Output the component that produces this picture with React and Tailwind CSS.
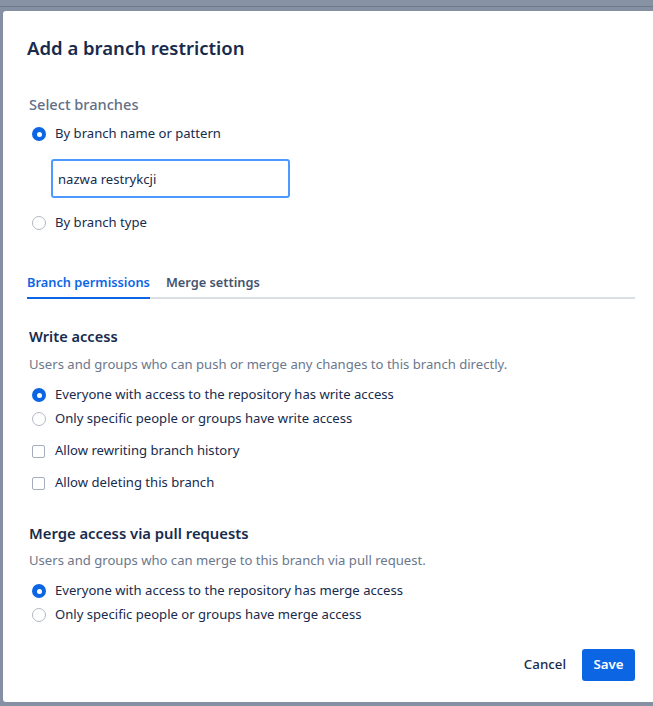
const font = { fontFamily: '"Noto Sans", sans-serif' };

const Radio = ({ checked, label }) => (
  <label className="flex items-center h-6 gap-[9px] text-[13.1px] text-[#172b4d]">
    {checked ? (
      <span className="w-[14px] h-[14px] rounded-full bg-[#0c66e4] flex items-center justify-center ml-[5px]">
        <span className="w-[5px] h-[5px] rounded-full bg-white" />
      </span>
    ) : (
      <span className="w-[14px] h-[14px] rounded-full border border-[#b3b9c4] bg-white ml-[5px]" />
    )}
    <span>{label}</span>
  </label>
);

const Checkbox = ({ label }) => (
  <label className="flex items-center h-6 gap-[10px] text-[13.1px] text-[#172b4d]">
    <span className="w-[13px] h-[13px] rounded-[2px] border-[1.5px] border-[#a5adba] bg-white ml-[5px]" />
    <span>{label}</span>
  </label>
);

const App = () => {
  return (
    <div style={font} className="w-[653px] h-[706px] overflow-hidden bg-[#8590a2]">
      <div className="h-[7px] border-b border-[#6f7a8c] bg-[#8792a3]" />
      <div className="pt-[4px] pl-[3px]">
        <div className="w-[656px] h-[691px] bg-white rounded-[3px] px-6 pt-[25px] flex flex-col">
          <h1 className="h-6 flex items-center text-[18.5px] font-semibold text-[#172b4d]">Add a branch restriction</h1>

          <h2 className="mt-[35px] h-5 flex items-center pl-[2px] text-[14.6px] font-medium text-[#626f86]">Select branches</h2>
          <div className="mt-[7px]">
            <Radio checked label="By branch name or pattern" />
          </div>
          <input
            readOnly
            value="nazwa restrykcji"
            style={font}
            className="mt-[13px] ml-6 w-[239px] h-[39px] rounded-[3px] border-2 border-[#4c9aff] px-[5px] text-[13.1px] text-[#172b4d] outline-none"
          />
          <div className="mt-[13px]">
            <Radio label="By branch type" />
          </div>

          {/* tabs */}
          <div className="mt-[34px] flex border-b-2 border-[#dcdfe4] w-[608px]">
            <div className="h-[28px] flex items-center text-[12.8px] font-semibold text-[#0c66e4] relative">
              Branch permissions
              <span className="absolute left-0 right-0 -bottom-[2px] h-[2px] bg-[#0c66e4]" />
            </div>
            <div className="h-[28px] flex items-center ml-4 text-[12.8px] font-semibold text-[#44546f]">Merge settings</div>
          </div>

          <h3 className="mt-[28px] h-5 flex items-center pl-[2px] text-[14.6px] font-semibold text-[#172b4d]">Write access</h3>
          <p className="mt-2 h-5 flex items-center pl-[2px] text-[13.1px] text-[#6b778c]">
            Users and groups who can push or merge any changes to this branch directly.
          </p>
          <div className="mt-2 flex flex-col">
            <Radio checked label="Everyone with access to the repository has write access" />
            <Radio label="Only specific people or groups have write access" />
          </div>
          <div className="mt-2 flex flex-col gap-2">
            <Checkbox label="Allow rewriting branch history" />
            <Checkbox label="Allow deleting this branch" />
          </div>

          <h3 className="mt-[28px] h-5 flex items-center pl-[2px] text-[14.8px] font-semibold text-[#172b4d]">Merge access via pull requests</h3>
          <p className="mt-2 h-5 flex items-center pl-[2px] text-[13.1px] text-[#6b778c]">
            Users and groups who can merge to this branch via pull request.
          </p>
          <div className="mt-2 flex flex-col">
            <Radio checked label="Everyone with access to the repository has merge access" />
            <Radio label="Only specific people or groups have merge access" />
          </div>

          <div className="mt-[22px] flex justify-end items-center gap-4 w-[608px]">
            <button className="h-8 px-0 text-[13.3px] font-medium text-[#172b4d]">Cancel</button>
            <button className="h-8 w-[53px] rounded-[3px] bg-[#0c66e4] text-[13.3px] font-semibold text-white">Save</button>
          </div>
        </div>
      </div>
    </div>
  );
};

export default App;
